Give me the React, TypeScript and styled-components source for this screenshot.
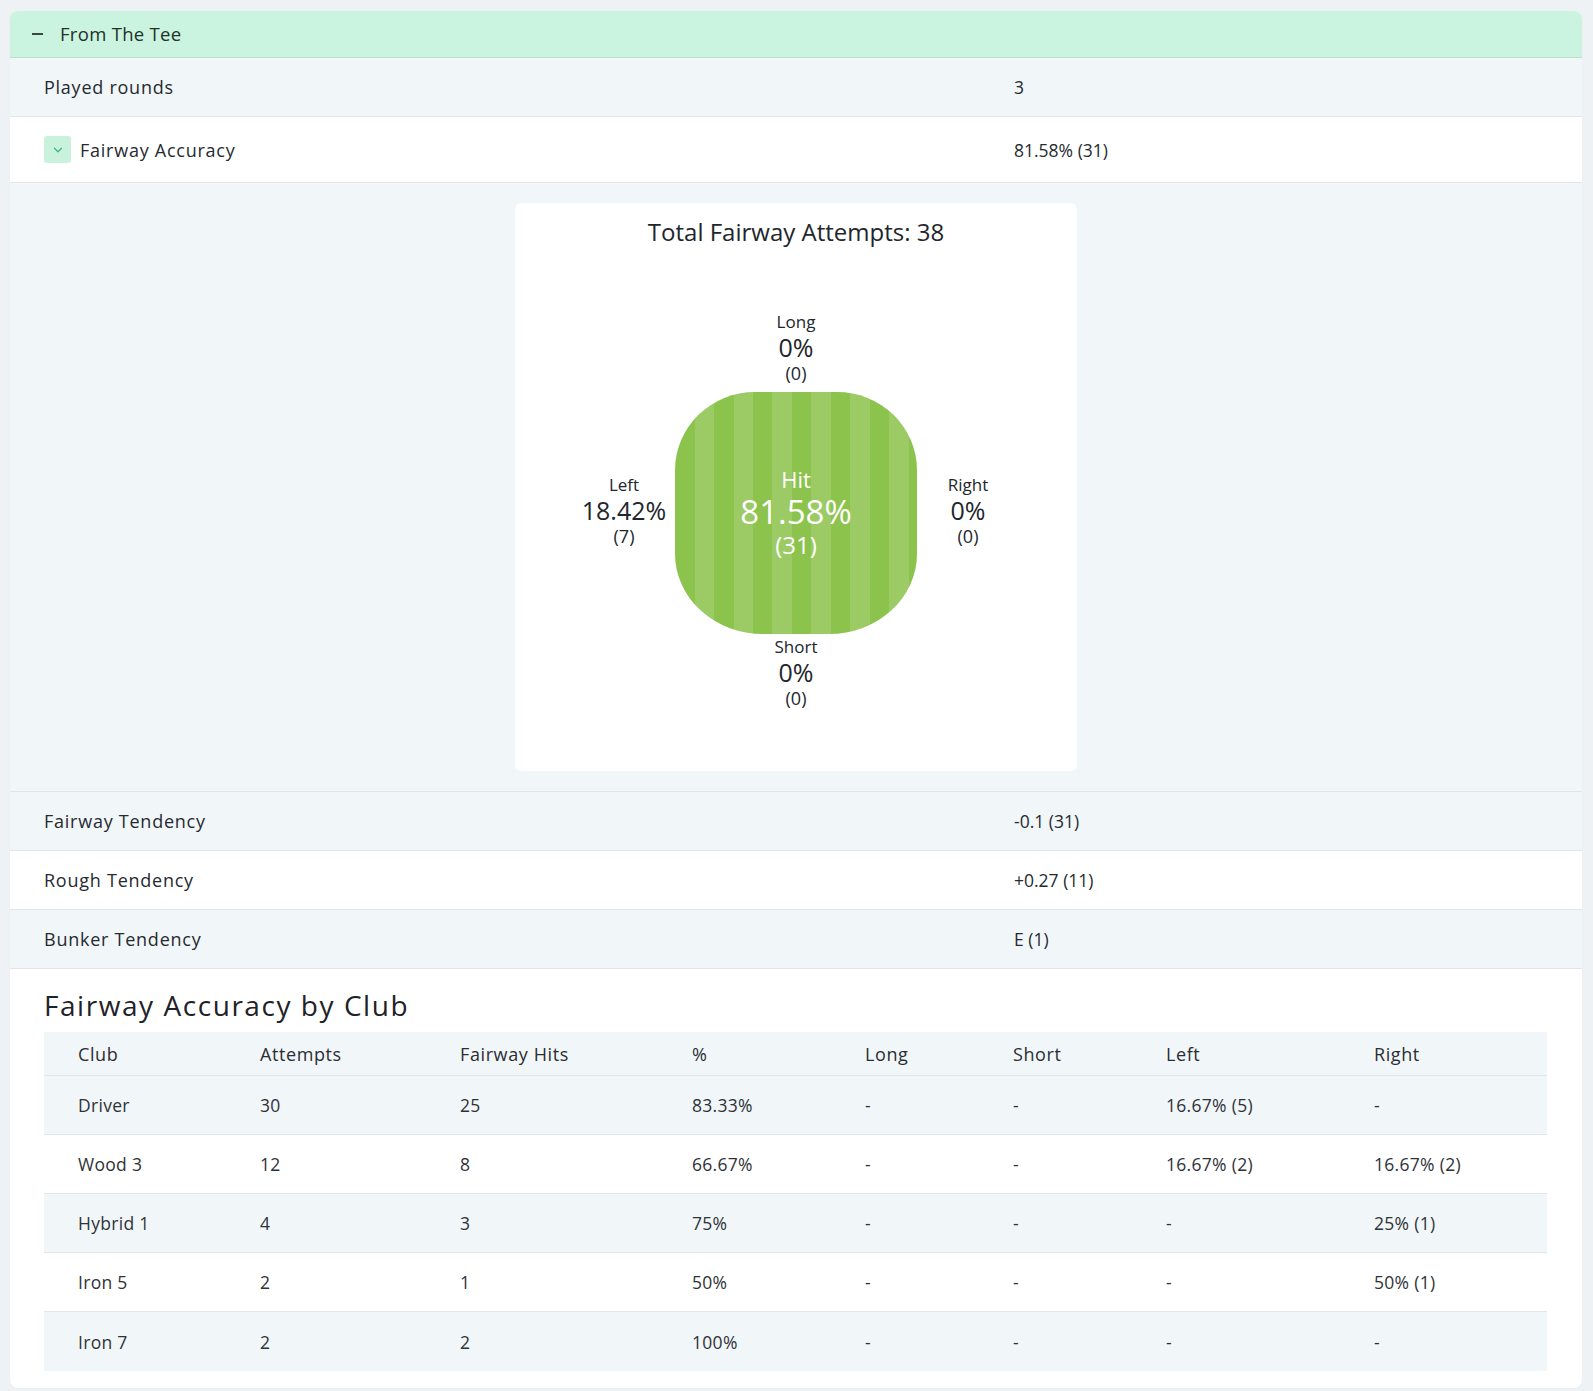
import React from "react";
import styled, { createGlobalStyle } from "styled-components";
import { ChevronDown } from "lucide-react";

const GlobalStyle = createGlobalStyle`
  html, body { margin: 0; padding: 0; }
  body {
    background: #eef2f5;
    font-family: "Open Sans", "Noto Sans", sans-serif;
    color: #262a30;
  }
  * { box-sizing: border-box; }
`;

const Page = styled.div`
  padding: 11px 11px 3px 10px;
`;

const Card = styled.div`
  background: #ffffff;
  border-radius: 8px;
  overflow: hidden;
  box-shadow: 0 0 2px rgba(0, 0, 0, 0.04);
`;

const SectionHeader = styled.div`
  height: 47px;
  display: flex;
  align-items: center;
  gap: 17px;
  padding-left: 22px;
  padding-bottom: 1px;
  background: #caf4e0;
  border-bottom: 1px solid #b9e0cd;
  font-size: 18.5px;
  letter-spacing: 0.3px;
  color: #22302a;
`;

const MinusMark = styled.span`
  width: 11px;
  height: 2px;
  background: #3a4640;
  display: block;
`;

const StatRow = styled.div<{ $shade?: boolean; $height?: number }>`
  display: grid;
  grid-template-columns: 970px 1fr;
  align-items: center;
  height: ${(p) => p.$height ?? 59}px;
  padding-left: 34px;
  background: ${(p) => (p.$shade ? "#f1f6f9" : "#ffffff")};
  border-bottom: 1px solid #e2e6e9;
`;

const LabelCell = styled.div`
  display: flex;
  align-items: center;
  gap: 9px;
  font-size: 18px;
  letter-spacing: 0.75px;
`;

const ValueCell = styled.div`
  font-size: 17.5px;
`;

const ToggleBox = styled.span`
  width: 27px;
  height: 27px;
  border-radius: 3px;
  background: #c8f2dc;
  color: #3cb878;
  display: inline-flex;
  align-items: center;
  justify-content: center;
`;

const ChartArea = styled.div`
  background: #f1f6f9;
  padding: 20px 0 20px;
  border-bottom: 1px solid #e2e6e9;
  display: flex;
  justify-content: center;
`;

const ChartCard = styled.div`
  width: 562px;
  height: 568px;
  background: #ffffff;
  border-radius: 6px;
  padding-top: 13px;
  display: flex;
  flex-direction: column;
  align-items: center;
`;

const ChartTitle = styled.div`
  font-size: 24px;
  line-height: 32px;
  color: #22262c;
`;

const ChartGrid = styled.div`
  margin-top: 63px;
  display: grid;
  grid-template-columns: 102px 242px 102px;
  grid-template-rows: auto 242px auto;
`;

const StatBlock = styled.div<{ $col: number; $row: number; $pad?: string }>`
  grid-column: ${(p) => p.$col};
  grid-row: ${(p) => p.$row};
  align-self: center;
  display: flex;
  flex-direction: column;
  align-items: center;
  padding: ${(p) => p.$pad ?? "0"};
  color: #22262c;
`;

const StatLabel = styled.span`
  font-size: 17px;
  line-height: 22px;
`;

const StatValue = styled.span`
  font-size: 25px;
  line-height: 29px;
`;

const StatCount = styled.span`
  font-size: 18px;
  line-height: 22px;
`;

const Fairway = styled.div`
  grid-column: 2;
  grid-row: 2;
  border-radius: 80px 80px 88px 88px / 78px 78px 80px 80px;
  background: repeating-linear-gradient(
    90deg,
    #8cc34c 0px,
    #8cc34c 19.5px,
    #9ccb66 19.5px,
    #9ccb66 39px
  );
  display: flex;
  flex-direction: column;
  align-items: center;
  justify-content: center;
  color: #ffffff;
  padding-bottom: 2px;
`;

const HitLabel = styled.span`
  font-size: 22px;
  line-height: 30px;
`;

const HitValue = styled.span`
  font-size: 33px;
  line-height: 36px;
`;

const HitCount = styled.span`
  font-size: 24px;
  line-height: 30px;
`;

const ClubSection = styled.div`
  padding: 17px 35px 17px 34px;
`;

const ClubHeading = styled.h2`
  margin: 0 0 8px;
  font-weight: 400;
  font-size: 28px;
  letter-spacing: 1.55px;
  line-height: 38px;
  color: #1f2328;
`;

const Columns = "182px 200px 232px 173px 148px 153px 208px 1fr";

const TableRow = styled.div<{ $shade?: boolean; $head?: boolean; $last?: boolean }>`
  display: grid;
  grid-template-columns: ${Columns};
  align-items: center;
  height: ${(p) => (p.$head ? 44 : 59)}px;
  padding-left: 34px;
  background: ${(p) => (p.$shade ? "#f1f6f9" : "#ffffff")};
  border-bottom: ${(p) => (p.$last ? "none" : "1px solid #e2e6e9")};
  font-size: ${(p) => (p.$head ? 18 : 17.5)}px;
  letter-spacing: ${(p) => (p.$head ? 0.6 : 0.3)}px;
  color: ${(p) => (p.$head ? "#2a2e33" : "#2f3338")};
`;

const Cell = styled.span``;

const clubRows = [
  ["Driver", "30", "25", "83.33%", "-", "-", "16.67% (5)", "-"],
  ["Wood 3", "12", "8", "66.67%", "-", "-", "16.67% (2)", "16.67% (2)"],
  ["Hybrid 1", "4", "3", "75%", "-", "-", "-", "25% (1)"],
  ["Iron 5", "2", "1", "50%", "-", "-", "-", "50% (1)"],
  ["Iron 7", "2", "2", "100%", "-", "-", "-", "-"],
];

const headers = ["Club", "Attempts", "Fairway Hits", "%", "Long", "Short", "Left", "Right"];

function Stat({
  col,
  row,
  label,
  value,
  count,
  pad,
}: {
  col: number;
  row: number;
  label: string;
  value: string;
  count: string;
  pad?: string;
}) {
  return (
    <StatBlock $col={col} $row={row} $pad={pad}>
      <StatLabel>{label}</StatLabel>
      <StatValue>{value}</StatValue>
      <StatCount>{count}</StatCount>
    </StatBlock>
  );
}

export default function App() {
  return (
    <>
      <GlobalStyle />
      <Page>
        <Card>
          <SectionHeader>
            <MinusMark />
            From The Tee
          </SectionHeader>
          <StatRow $shade>
            <LabelCell>Played rounds</LabelCell>
            <ValueCell>3</ValueCell>
          </StatRow>
          <StatRow $height={66}>
            <LabelCell>
              <ToggleBox>
                <ChevronDown size={14} strokeWidth={2.2} />
              </ToggleBox>
              Fairway Accuracy
            </LabelCell>
            <ValueCell>81.58% (31)</ValueCell>
          </StatRow>
          <ChartArea>
            <ChartCard>
              <ChartTitle>Total Fairway Attempts: 38</ChartTitle>
              <ChartGrid>
                <Stat col={2} row={1} pad="0 0 8px" label="Long" value="0%" count="(0)" />
                <Stat col={1} row={2} pad="0 0 5px" label="Left" value="18.42%" count="(7)" />
                <Fairway>
                  <HitLabel>Hit</HitLabel>
                  <HitValue>81.58%</HitValue>
                  <HitCount>(31)</HitCount>
                </Fairway>
                <Stat col={3} row={2} pad="0 0 5px" label="Right" value="0%" count="(0)" />
                <Stat col={2} row={3} pad="2px 0 0" label="Short" value="0%" count="(0)" />
              </ChartGrid>
            </ChartCard>
          </ChartArea>
          <StatRow $shade>
            <LabelCell>Fairway Tendency</LabelCell>
            <ValueCell>-0.1 (31)</ValueCell>
          </StatRow>
          <StatRow>
            <LabelCell>Rough Tendency</LabelCell>
            <ValueCell>+0.27 (11)</ValueCell>
          </StatRow>
          <StatRow $shade>
            <LabelCell>Bunker Tendency</LabelCell>
            <ValueCell>E (1)</ValueCell>
          </StatRow>
          <ClubSection>
            <ClubHeading>Fairway Accuracy by Club</ClubHeading>
            <TableRow $shade $head>
              {headers.map((h) => (
                <Cell key={h}>{h}</Cell>
              ))}
            </TableRow>
            {clubRows.map((r, i) => (
              <TableRow key={r[0]} $shade={i % 2 === 0} $last={i === clubRows.length - 1}>
                {r.map((c, j) => (
                  <Cell key={j}>{c}</Cell>
                ))}
              </TableRow>
            ))}
          </ClubSection>
        </Card>
      </Page>
    </>
  );
}
